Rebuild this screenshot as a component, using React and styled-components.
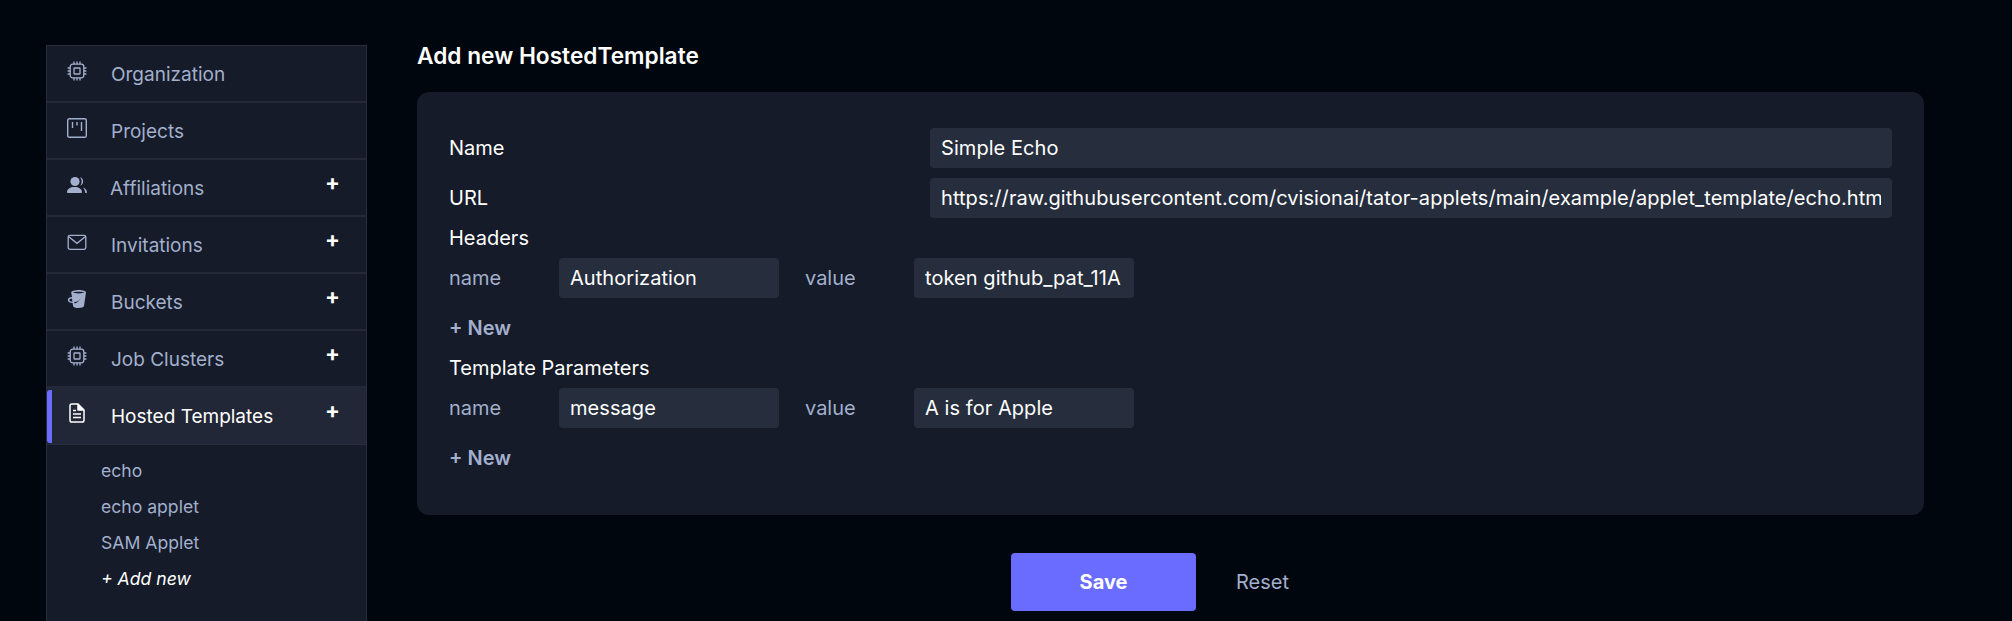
import React from "react";
import styled, { createGlobalStyle } from "styled-components";

const Global = createGlobalStyle`
  html, body { margin: 0; padding: 0; background: #00060d; }
  * { box-sizing: border-box; }
`;

const Page = styled.div`
  width: 2012px;
  height: 621px;
  overflow: hidden;
  background: #00060d;
  font-family: Inter, "Noto Sans", sans-serif;
  display: flex;
  align-items: flex-start;
  padding: 45px 0 0 46px;
`;
const Sidebar = styled.nav`
  width: 321px;
  height: 620px;
  flex: none;
  background: #151b28;
  border: 1px solid #262e3d;
  border-bottom: 0;
`;
const NavRow = styled.div`
  height: 57px;
  display: flex;
  align-items: flex-start;
  position: relative;
  border-bottom: ${(p) => (p.$active ? "1px solid #262e3d" : "2px solid #232938")};
  background: ${(p) => (p.$active ? "#212736" : "transparent")};
  color: ${(p) => (p.$active ? "#ffffff" : "#a2afcd")};
`;
const Accent = styled.span`
  position: absolute;
  left: 0;
  top: 2px;
  bottom: 1px;
  width: 5px;
  background: #696cff;
  border-radius: 3px 0 0 3px;
`;
const IconSlot = styled.span`
  width: 20px;
  height: 20px;
  margin: 15px 0 0 20px;
  flex: none;
  display: block;
  svg { display: block; width: 20px; height: 20px; }
`;
const NavLabel = styled.span`
  font-size: 19px;
  line-height: 24px;
  margin: 17px 0 0 ${(p) => p.$gap ?? 24}px;
  flex: 1;
`;
const Plus = styled.span`
  color: #fff;
  font-size: 22px;
  font-weight: 700;
  line-height: 22px;
  margin: 11px 26px 0 0;
`;
const SubList = styled.ul`
  list-style: none;
  margin: 0;
  padding: 8px 0 0 54px;
`;
const SubItem = styled.li`
  font-size: 17.6px;
  line-height: 36px;
  color: ${(p) => (p.$add ? "#fff" : "#a2afcd")};
  font-style: ${(p) => (p.$add ? "italic" : "normal")};
`;
const Main = styled.main`
  margin-left: 50px;
  width: 1507px;
  flex: none;
`;
const Heading = styled.h1`
  margin: 0;
  font-size: 22.7px;
  line-height: 22px;
  font-weight: 600;
  color: #fff;
`;
const Card = styled.section`
  margin-top: 25px;
  height: 423px;
  background: #151b28;
  border-radius: 12px;
  padding: 36px 32px 0;
`;
const FieldRow = styled.div`
  display: flex;
  align-items: center;
  margin-bottom: 10px;
`;
const FieldLabel = styled.label`
  width: 481px;
  font-size: 20px;
  color: #fff;
`;
const SectionLabel = styled.div`
  font-size: 20px;
  line-height: 20px;
  color: #fff;
  margin-bottom: 10px;
`;
const Input = styled.input`
  height: 40px;
  width: ${(p) => p.$w}px;
  flex: none;
  background: #262e3d;
  border: 0;
  border-radius: 4px;
  padding: 0 11px;
  color: #fff;
  font: 20px Inter, sans-serif;
  letter-spacing: 0.06px;
  outline: none;
`;
const PairRow = styled.div`
  display: flex;
  align-items: center;
  height: 40px;
`;
const PairLabel = styled.span`
  font-size: 20px;
  color: #a2afcd;
  width: ${(p) => p.$w}px;
`;
const PairValue = styled(PairLabel)`
  margin-left: 26px;
`;
const AddNew = styled.div`
  margin-top: 19px;
  margin-bottom: ${(p) => p.$mb}px;
  font-size: 20px;
  line-height: 22px;
  font-weight: 600;
  color: #a2afcd;
`;
const Actions = styled.div`
  display: flex;
  align-items: center;
  margin-top: 38px;
  margin-left: 594px;
`;
const Save = styled.button`
  width: 185px;
  height: 58px;
  background: #696cff;
  color: #fff;
  border: 0;
  border-radius: 4px;
  font: 700 20px Inter, sans-serif;
`;
const Reset = styled.span`
  margin-left: 40px;
  font-size: 20px;
  color: #a2afcd;
`;

const Cpu = () => (
  <svg viewBox="0 0 20 20" fill="none" stroke="currentColor" strokeWidth="1.3">
    <rect x="3.200" y="3.200" width="13.600" height="13.600" rx="2.500" />
    <rect x="7" y="7" width="6" height="6" rx="0.500" />
    <path d="M7 .6v2.600M10 .6v2.600M13 .6v2.600M7 16.800v2.600M10 16.800v2.600M13 16.800v2.600M.6 7h2.600M.6 10h2.600M.6 13h2.600M16.800 7h2.600M16.800 10h2.600M16.800 13h2.600" />
  </svg>
);
const Project = () => (
  <svg viewBox="0 0 20 20" fill="none" stroke="currentColor" strokeWidth="1.4">
    <rect x=".7" y=".7" width="18.600" height="18.600" rx="1.600" />
    <path d="M5.500 4v6M10 4v3.500M14.500 4v9" />
  </svg>
);
const People = () => (
  <svg viewBox="0 0 20 20" fill="currentColor">
    <circle cx="8" cy="6.500" r="4.600" />
    <path d="M0 17.200C0 14 3 12 7.500 12s7.500 2 7.500 5.200c0 .5-.3.800-.8.800H.8c-.5 0-.8-.3-.8-.8z" />
    <path d="M13 2.200a4.400 4.400 0 0 1 0 8.400 6.500 6.500 0 0 0 0-8.400z" />
    <path d="M16 12.500c2.300.8 4 2.600 4 5 0 .3-.2.500-.5.500h-1.300c-.1-2-.9-4-2.200-5.500z" />
  </svg>
);
const Mail = () => (
  <svg viewBox="0 0 20 20" fill="none" stroke="currentColor" strokeWidth="1.3">
    <rect x="1.200" y="3.300" width="17.600" height="14" rx="1.800" />
    <path d="M1.800 4.800 10 11.300l8.200-6.500" />
  </svg>
);
const Bucket = () => (
  <svg viewBox="0 0 20 20" fill="currentColor">
    <path d="M4.200 3.500C4.200 2 8 1 12 1s7 1 7 2.500c0 .2 0 .3-.1.500L17 17c-.2 1.300-2.500 2-5.500 2-2.700 0-5-.6-5.400-2l-.5-3C3 14 .8 12.800.8 11c0-1.700 1.700-3 4.200-3z" />
    <path fill="#151b28" d="M5.800 3.600c1.500 1 10 1.100 11.800 0C16 2.500 7 2.400 5.800 3.600zM2.400 11c0 1 1.200 1.700 3 1.700l-.4-3.300C3.400 9.500 2.400 10 2.400 11zM7.300 13c2.200.3 5-1 6.400-4-1 2.400-3 4.600-6.200 5.600z" />
  </svg>
);
const Doc = () => (
  <svg viewBox="0 0 20 20" fill="none" stroke="currentColor" strokeWidth="1.500" strokeLinejoin="round">
    <path d="M3 2.800C3 1.800 3.800 1 4.800 1H11l6 6v10.200c0 1-.8 1.800-1.800 1.800H4.800c-1 0-1.800-.8-1.800-1.800z" />
    <path d="M11 1v6h6" fill="currentColor" />
    <path d="M6 7.500h3M6 11h8M6 14.500h8" />
  </svg>
);

const Item = ({ icon, label, plus, active, gap }) => (
  <NavRow $active={active}>
    {active && <Accent />}
    <IconSlot>{icon}</IconSlot>
    <NavLabel $gap={gap}>{label}</NavLabel>
    {plus && <Plus>+</Plus>}
  </NavRow>
);

const Pair = ({ name, value }) => (
  <PairRow>
    <PairLabel $w={110}>name</PairLabel>
    <Input $w={220} defaultValue={name} />
    <PairValue $w={109}>value</PairValue>
    <Input $w={220} defaultValue={value} />
  </PairRow>
);

export default function App() {
  return (
    <Page>
      <Global />
      <Sidebar>
        <Item icon={<Cpu />} label="Organization" />
        <Item icon={<Project />} label="Projects" />
        <Item icon={<People />} label="Affiliations" plus gap={23} />
        <Item icon={<Mail />} label="Invitations" plus />
        <Item icon={<Bucket />} label="Buckets" plus />
        <Item icon={<Cpu />} label="Job Clusters" plus />
        <Item icon={<Doc />} label="Hosted Templates" plus active />
        <SubList>
          <SubItem>echo</SubItem>
          <SubItem>echo applet</SubItem>
          <SubItem>SAM Applet</SubItem>
          <SubItem $add>+ Add new</SubItem>
        </SubList>
      </Sidebar>
      <Main>
        <Heading>Add new HostedTemplate</Heading>
        <Card>
          <FieldRow>
            <FieldLabel>Name</FieldLabel>
            <Input $w={962} defaultValue="Simple Echo" />
          </FieldRow>
          <FieldRow>
            <FieldLabel>URL</FieldLabel>
            <Input $w={962} defaultValue="https://raw.githubusercontent.com/cvisionai/tator-applets/main/example/applet_template/echo.html" />
          </FieldRow>
          <SectionLabel>Headers</SectionLabel>
          <Pair name="Authorization" value="token github_pat_11A" />
          <AddNew $mb={19}>+ New</AddNew>
          <SectionLabel>Template Parameters</SectionLabel>
          <Pair name="message" value="A is for Apple" />
          <AddNew>+ New</AddNew>
        </Card>
        <Actions>
          <Save>Save</Save>
          <Reset>Reset</Reset>
        </Actions>
      </Main>
    </Page>
  );
}
